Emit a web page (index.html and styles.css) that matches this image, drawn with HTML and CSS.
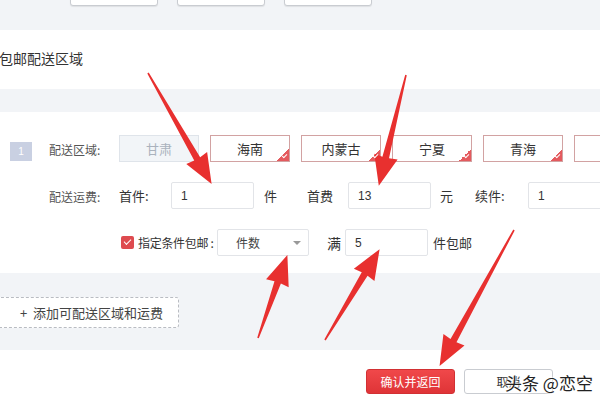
FILE: index.html
```html
<!DOCTYPE html>
<html lang="zh-CN">
<head>
<meta charset="utf-8">
<link rel="stylesheet" href="styles.css">
</head>
<body>
<div class="page">
  <div class="topbar">
    <div class="top-btns">
      <button class="tbtn">全选</button>
      <button class="tbtn">反选</button>
      <button class="tbtn">清除已选</button>
    </div>
  </div>
  <div class="title-band"><span class="title">包邮配送区域</span></div>
  <div class="sep-band"></div>
  <div class="region">
    <div class="badge">1</div>
    <div class="rows">
      <div class="row">
        <span class="lbl">配送区域:</span>
        <div class="tags">
          <span class="tag disabled">甘肃</span>
          <span class="tag on">海南</span>
          <span class="tag on">内蒙古</span>
          <span class="tag on">宁夏</span>
          <span class="tag on">青海</span>
          <span class="tag on">新疆</span>
        </div>
      </div>
      <div class="row">
        <span class="lbl">配送运费:</span>
        <span class="txt first-lbl">首件:</span>
        <span class="inp">1</span>
        <span class="txt unit-jian">件</span>
        <span class="txt fee-lbl">首费</span>
        <span class="inp">13</span>
        <span class="txt unit-yuan">元</span>
        <span class="txt next-lbl">续件:</span>
        <span class="inp">1</span>
      </div>
      <div class="row cond">
        <span class="chk"></span>
        <span class="txt cond-lbl">指定条件包邮 :</span>
        <span class="sel">件数<span class="caret"></span></span>
        <span class="txt man">满</span>
        <span class="inp man-inp">5</span>
        <span class="txt unit-free">件包邮</span>
      </div>
    </div>
  </div>
  <div class="add-band">
    <div class="add-btn">+&nbsp; 添加可配送区域和运费</div>
  </div>
  <div class="footer">
    <button class="fbtn ok">确认并返回</button>
    <button class="fbtn cancel">取消</button>
  </div>
</div>
<svg class="arrows" width="600" height="400" viewBox="0 0 600 400">
  <g fill="#e8302f">
    <polygon transform="translate(148,73) rotate(60.2)" points="0,-0.8 99,-3.4 98,-12 128,0 98,12 99,3.4 0,0.8"/>
    <polygon transform="translate(406,75) rotate(103.8)" points="0,-0.8 85,-3.4 84,-12 114,0 84,12 85,3.4 0,0.8"/>
    <polygon transform="translate(258,338) rotate(-70.5)" points="0,-0.8 59,-3.4 58,-12 88,0 58,12 59,3.4 0,0.8"/>
    <polygon transform="translate(325,340) rotate(-59)" points="0,-0.8 77,-3.4 76,-12 106,0 76,12 77,3.4 0,0.8"/>
    <polygon transform="translate(514,230) rotate(118.7)" points="0,-0.8 126,-3.4 125,-12 155,0 125,12 126,3.4 0,0.8"/>
  </g>
</svg>
<div class="watermark">头条 @恋空</div>
</body>
</html>
```
FILE: styles.css
```css
* { box-sizing: border-box; }
html, body {
  margin: 0;
  padding: 0;
  width: 600px;
  height: 400px;
  overflow: hidden;
  background: #fff;
  font-family: "Noto Sans CJK SC", "Liberation Sans", sans-serif;
  color: #333;
}
.page {
  width: 600px;
  height: 400px;
  overflow: hidden;
  display: flex;
  flex-direction: column;
}
.topbar {
  height: 30px;
  background: #f2f4f7;
  flex: none;
}
.top-btns {
  display: flex;
  gap: 19px;
  padding-left: 70px;
  margin-top: -20px;
}
.tbtn {
  width: 88px;
  height: 26px;
  background: #fff;
  border: 1px solid #c9ccd1;
  border-radius: 3px;
  box-shadow: 0 1px 1px rgba(0,0,0,0.08);
  font-family: inherit;
  font-size: 12px;
  color: #444;
  padding: 0;
}
.title-band {
  height: 59px;
  flex: none;
  display: flex;
  align-items: center;
  padding-bottom: 4px;
}
.title {
  margin-left: -1px;
  font-size: 14px;
  color: #333;
}
.sep-band {
  height: 23px;
  flex: none;
  background: #f2f4f7;
}
.region {
  height: 161px;
  flex: none;
  display: flex;
  align-items: flex-start;
  padding-left: 10px;
  padding-top: 23px;
}
.badge {
  width: 22px;
  height: 19px;
  margin-top: 7px;
  margin-right: 17px;
  background: #c9d0e2;
  color: #fff;
  font-size: 10px;
  font-family: "Liberation Sans", sans-serif;
  display: flex;
  align-items: center;
  justify-content: center;
  flex: none;
}
.rows {
  display: flex;
  flex-direction: column;
  gap: 20px;
}
.row {
  display: flex;
  align-items: center;
  height: 27px;
  white-space: nowrap;
}
.lbl {
  width: 70px;
  flex: none;
  font-size: 12px;
  color: #555;
  padding-top: 2px;
}
.tags {
  display: flex;
  gap: 11px;
}
.tag {
  position: relative;
  width: 80px;
  height: 27px;
  flex: none;
  display: flex;
  align-items: center;
  justify-content: center;
  font-size: 13px;
  background: #fff;
}
.tag.disabled {
  background: #f2f5f8;
  border: 1px solid #dfe4ea;
  color: #aab2bd;
}
.tag.on {
  border: 1px solid #d2a2a2;
  color: #333;
}
.tag.on::after {
  content: "";
  position: absolute;
  right: 0;
  bottom: 0;
  width: 12px;
  height: 12px;
  background: linear-gradient(135deg, transparent 50%, #e45a5e 50%);
}
.tag.on::before {
  content: "";
  position: absolute;
  right: 2px;
  bottom: 4px;
  width: 4px;
  height: 2px;
  border-left: 1px solid #fff;
  border-bottom: 1px solid #fff;
  transform: rotate(-45deg);
  z-index: 1;
}
.txt {
  font-size: 13px;
  color: #333;
  flex: none;
}
.first-lbl { width: 52px; }
.inp {
  width: 83px;
  height: 27px;
  flex: none;
  border: 1px solid #e2e4e8;
  background: #fff;
  border-radius: 2px;
  font-family: "Liberation Sans", sans-serif;
  font-size: 12px;
  color: #333;
  padding-left: 9px;
  display: flex;
  align-items: center;
}
.unit-jian { margin-left: 10px; width: 43px; }
.fee-lbl { width: 41px; }
.unit-yuan { margin-left: 9px; width: 35px; }
.next-lbl { width: 53px; }
.cond { padding-left: 71px; }
.chk {
  position: relative;
  width: 13px;
  height: 13px;
  flex: none;
  background: #de4b4f;
  border-radius: 2px;
  margin-left: 1px;
  margin-right: 4px;
}
.chk::after {
  content: "";
  position: absolute;
  left: 3px;
  top: 3px;
  width: 6px;
  height: 3px;
  border-left: 1.5px solid #fff;
  border-bottom: 1.5px solid #fff;
  transform: rotate(-45deg);
}
.cond-lbl {
  width: 79px;
  font-size: 12px;
  letter-spacing: -0.3px;
}
.sel {
  position: relative;
  width: 92px;
  height: 27px;
  flex: none;
  border: 1px solid #e2e4e8;
  border-radius: 2px;
  background: #fff;
  font-size: 12px;
  color: #444;
  padding-left: 18px;
  display: flex;
  align-items: center;
}
.caret {
  position: absolute;
  right: 7px;
  top: 11px;
  width: 0;
  height: 0;
  border-left: 4px solid transparent;
  border-right: 4px solid transparent;
  border-top: 4px solid #999;
}
.man { margin-left: 18px; width: 18px; font-size: 14px; }
.unit-free { margin-left: 5px; }
.add-band {
  height: 77px;
  flex: none;
  background: #f2f4f7;
  padding-top: 24px;
}
.add-btn {
  display: inline-flex;
  align-items: center;
  height: 31px;
  margin-left: -12px;
  padding-left: 31px;
  padding-right: 15px;
  background: #fff;
  border: 1px dashed #b9bcc2;
  border-radius: 3px;
  font-size: 13px;
  color: #444;
}
.footer {
  flex: 1;
  display: flex;
  gap: 9px;
  padding-left: 366px;
  padding-top: 19px;
}
.fbtn {
  width: 89px;
  height: 25px;
  border-radius: 3px;
  font-family: inherit;
  font-size: 12px;
  padding: 0;
}
.ok {
  background: linear-gradient(#f0484a, #df3437);
  border: 1px solid #d23033;
  color: #fff;
}
.cancel {
  background: #fff;
  border: 1px solid #c9ccd1;
  color: #333;
}
.arrows {
  position: absolute;
  left: 0;
  top: 0;
  pointer-events: none;
}
.watermark {
  position: absolute;
  left: 505px;
  top: 370px;
  font-size: 17px;
  color: #222;
  font-family: "Noto Sans CJK SC", sans-serif;
  text-shadow: 0 0 2px #fff, 0 0 2px #fff, 0 0 3px #fff;
  white-space: nowrap;
}
```
